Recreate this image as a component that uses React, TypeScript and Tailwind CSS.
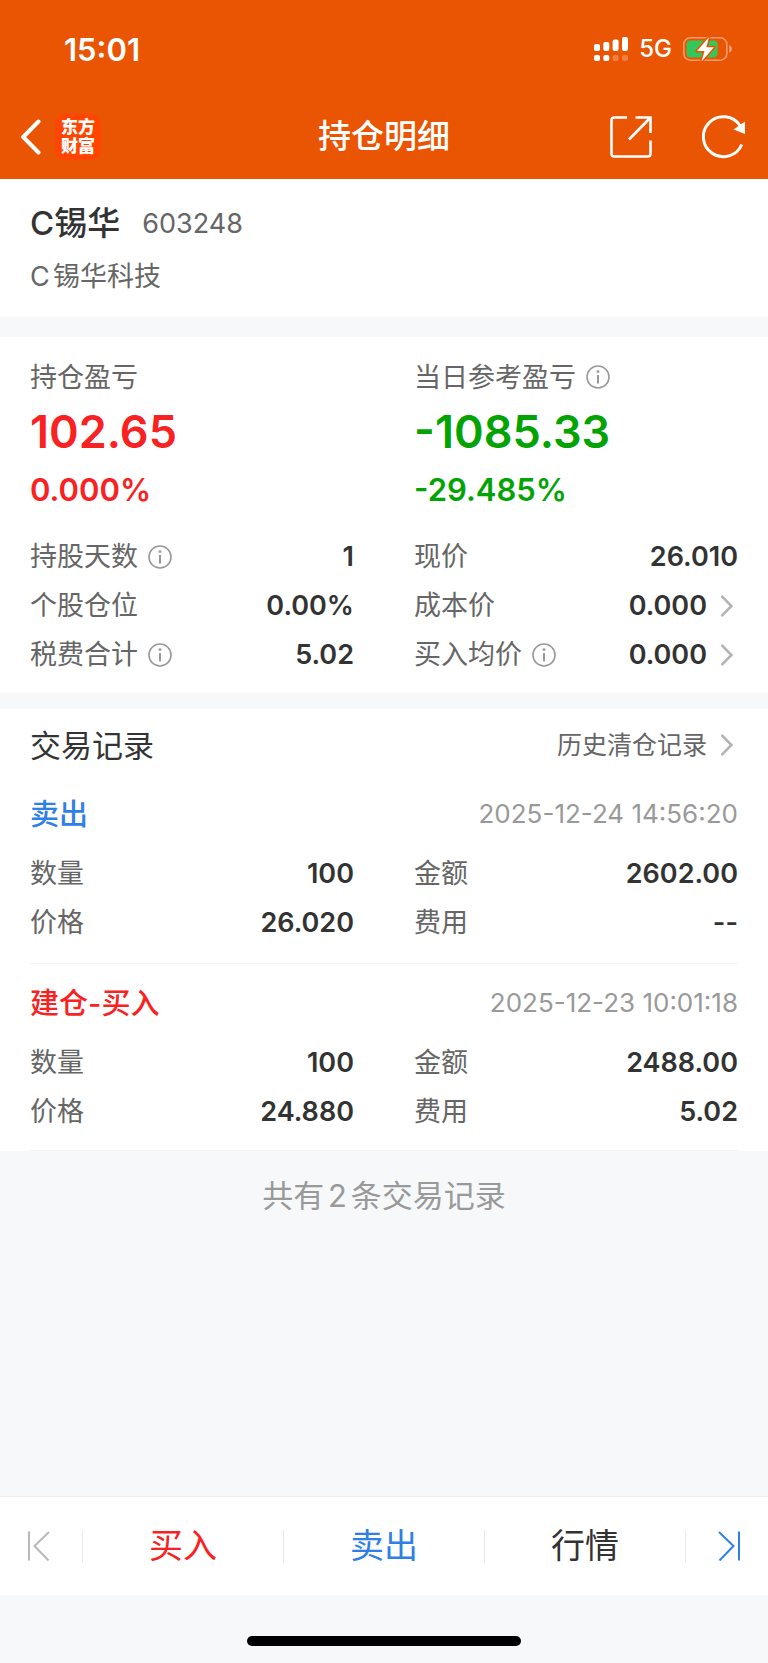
import { ReactNode } from "react";

type RowProps = {
  label: string;
  value: string;
  info?: boolean;
  link?: boolean;
};

type TradeRecord = {
  type: string;
  color: string;
  time: string;
  rows: RowProps[];
};

const holdingRows: RowProps[] = [
  { label: "持股天数", value: "1", info: true },
  { label: "现价", value: "26.010" },
  { label: "个股仓位", value: "0.00%" },
  { label: "成本价", value: "0.000", link: true },
  { label: "税费合计", value: "5.02", info: true },
  { label: "买入均价", value: "0.000", info: true, link: true },
];

const records: TradeRecord[] = [
  {
    type: "卖出",
    color: "text-[#2f80e6]",
    time: "2025-12-24 14:56:20",
    rows: [
      { label: "数量", value: "100" },
      { label: "金额", value: "2602.00" },
      { label: "价格", value: "26.020" },
      { label: "费用", value: "--" },
    ],
  },
  {
    type: "建仓-买入",
    color: "text-[#f92222]",
    time: "2025-12-23 10:01:18",
    rows: [
      { label: "数量", value: "100" },
      { label: "金额", value: "2488.00" },
      { label: "价格", value: "24.880" },
      { label: "费用", value: "5.02" },
    ],
  },
];

const InfoButton = ({ label }: { label: string }) => (
  <button type="button" aria-label={`${label}说明`} className="shrink-0">
    <svg width="24" height="24" viewBox="0 0 24 24" fill="none">
      <circle cx="12" cy="12" r="11" stroke="#999" strokeWidth="1.6" />
      <circle cx="12" cy="6.6" r="1.4" fill="#999" />
      <path d="M12 10v8.4" stroke="#999" strokeWidth="2" />
    </svg>
  </button>
);

const Chevron = () => (
  <svg width="12" height="22" viewBox="0 0 12 22" fill="none" className="mr-[5px] shrink-0">
    <path d="M1.2 1.6L10.4 11L1.2 20.4" stroke="#b4b4b4" strokeWidth="2.6" strokeLinecap="round" />
  </svg>
);

const Row = ({ label, value, info, link }: RowProps) => (
  <div className="flex h-[49px] items-center justify-between">
    <dt className="flex items-center gap-2.5 text-[27px] text-[#666]">
      {label}
      {info && <InfoButton label={label} />}
    </dt>
    <dd className="text-[27px] font-semibold text-[#333]">
      {link ? (
        <button type="button" className="flex items-center gap-3.5">
          {value}
          <Chevron />
        </button>
      ) : (
        value
      )}
    </dd>
  </div>
);

const StatusBar = () => (
  <div className="flex h-[98px] items-center justify-between pr-9 pl-16">
    <span className="text-[31px] font-semibold">15:01</span>
    <div className="flex items-center gap-[11px]">
      <svg width="34" height="24" viewBox="0 0 34 24" fill="#fff">
        <rect x="0" y="7" width="6" height="7" rx="2" />
        <rect x="9.3" y="5" width="6" height="9" rx="2" />
        <rect x="18.6" y="2.5" width="6" height="11.5" rx="2" />
        <rect x="28" y="0" width="6" height="14" rx="2" />
        <rect x="0" y="18" width="6" height="6" rx="2" />
        <rect x="9.3" y="18" width="6" height="6" rx="2" />
        <rect x="18.6" y="18" width="6" height="6" rx="2" opacity=".25" />
        <rect x="28" y="18" width="6" height="6" rx="2" opacity=".25" />
      </svg>
      <span className="text-[24px] font-medium">5G</span>
      <svg width="49" height="26" viewBox="0 0 49 26" fill="none">
        <rect x=".8" y="1.8" width="43" height="22.4" rx="6.5" stroke="#fff" strokeOpacity=".42" strokeWidth="1.6" />
        <path d="M46.3 9.3c3.3 1.200 3.300 6.200 0 7.400z" fill="#fff" fillOpacity=".5" />
        <rect x="3.500" y="4.500" width="31" height="17" rx="4" fill="#34c759" />
        <path
          d="M26 1L14 15h7.500L18.500 25.500L31 11.200h-7.600z"
          fill="#fff"
          stroke="#ea5504"
          strokeWidth="3"
          strokeLinejoin="round"
          paintOrder="stroke"
        />
      </svg>
    </div>
  </div>
);

const NavBar = () => (
  <div className="flex h-[81px] items-center justify-between px-5 pb-1">
    <div className="flex flex-1 items-center gap-3.5">
      <button type="button" aria-label="返回">
        <svg width="21" height="36" viewBox="0 0 21 36" fill="none">
          <path d="M18.5 2.5L3.2 18L18.5 33.5" stroke="#fff" strokeWidth="4" strokeLinecap="round" strokeLinejoin="round" />
        </svg>
      </button>
      <span className="flex size-[46px] flex-col items-center justify-center rounded-[10px] bg-[#ff4500] text-[17px] leading-[19px] font-black">
        <span>东方</span>
        <span>财富</span>
      </span>
    </div>
    <h1 className="text-[33px] font-medium">持仓明细</h1>
    <div className="flex flex-1 items-center justify-end gap-[50px]">
      <button type="button" aria-label="分享">
        <svg width="42" height="42" viewBox="0 0 42 42" fill="none" stroke="#fff" strokeWidth="2.6">
          <path d="M17 1.5H4A2.5 2.5 0 0 0 1.5 4v34A2.5 2.5 0 0 0 4 40.5h34a2.5 2.5 0 0 0 2.5-2.5V24.5" />
          <path d="M25.5 1.5h15v15.5M40 2L19 23.5" />
        </svg>
      </button>
      <button type="button" aria-label="刷新">
        <svg width="46" height="44" viewBox="0 0 46 44" fill="none">
          <path d="M39.8 29.5A20 20 0 1 1 38 10.500" stroke="#fff" strokeWidth="3" />
          <path d="M43 6.500V19L31.500 14.500z" fill="#fff" />
        </svg>
      </button>
    </div>
  </div>
);

const TabButton = ({ color, children }: { color: string; children: ReactNode }) => (
  <button type="button" className={`h-full flex-1 text-[34px] ${color}`}>
    {children}
  </button>
);

const Divider = () => <span className="h-[33px] w-px bg-[#e9e9e9]" />;

const App = () => {
  return (
    <div className="flex min-h-screen flex-col bg-[#f7f8fa] font-[Inter,'Noto_Sans_CJK_SC',sans-serif] leading-none text-[#333]">
      <header className="bg-[#ea5504] text-white">
        <StatusBar />
        <NavBar />
      </header>

      <main className="flex-1">
        <section className="bg-white px-[30px] pt-5 pb-3">
          <div className="flex h-12 items-center gap-[22px]">
            <h2 className="text-[33px] font-medium">C锡华</h2>
            <span className="text-[27px] text-[#666]">603248</span>
          </div>
          <p className="flex h-[58px] items-center text-[27px] text-[#666] [text-autospace:normal]">
            C锡华科技
          </p>
        </section>

        <section className="mt-5 bg-white px-[30px] pt-4 pb-3.5">
          <div className="grid grid-cols-2 gap-x-[60px]">
            <div>
              <h3 className="flex h-12 items-center text-[27px] text-[#666]">持仓盈亏</h3>
              <p className="flex h-[60px] items-center text-[45px] font-semibold text-[#f92222]">102.65</p>
              <p className="flex h-14 items-center text-[31px] font-semibold text-[#f92222]">0.000%</p>
            </div>
            <div>
              <h3 className="flex h-12 items-center gap-2.5 text-[27px] text-[#666]">
                当日参考盈亏
                <InfoButton label="当日参考盈亏" />
              </h3>
              <p className="flex h-[60px] items-center text-[45px] font-semibold text-[#04a304]">-1085.33</p>
              <p className="flex h-14 items-center text-[31px] font-semibold text-[#04a304]">-29.485%</p>
            </div>
          </div>
          <dl className="mt-[15px] grid grid-cols-2 gap-x-[60px]">
            {holdingRows.map((row) => (
              <Row key={row.label} {...row} />
            ))}
          </dl>
        </section>

        <section className="mt-4 bg-white px-[30px] pt-1.5">
          <div className="flex h-[60px] items-center justify-between">
            <h2 className="text-[31px]">交易记录</h2>
            <button type="button" className="flex items-center gap-3.5 text-[25px] text-[#666]">
              历史清仓记录
              <Chevron />
            </button>
          </div>
          {records.map((record) => (
            <article key={record.time} className="border-b border-[#f4f4f6] pt-3 pb-4 last:pb-3.5">
              <div className="flex h-[54px] items-center justify-between">
                <h3 className={`text-[29px] font-medium ${record.color}`}>{record.type}</h3>
                <time className="text-[26px] text-[#999]">{record.time}</time>
              </div>
              <dl className="mt-2 grid grid-cols-2 gap-x-[60px]">
                {record.rows.map((row) => (
                  <Row key={row.label} {...row} />
                ))}
              </dl>
            </article>
          ))}
        </section>

        <p className="flex h-[88px] items-center justify-center text-[31px] text-[#999] [text-autospace:normal]">
          共有2条交易记录
        </p>
      </main>

      <footer>
        <nav className="flex h-[99px] items-center border-t border-[#f0f0f0] bg-white">
          <button type="button" aria-label="上一只" className="flex h-full w-[82px] items-center pl-7">
            <svg width="22" height="30" viewBox="0 0 22 30" fill="none" stroke="#b8b8b8" strokeWidth="2">
              <path d="M1 .5v29M21 1L6.5 15L20.5 29.5" />
            </svg>
          </button>
          <Divider />
          <TabButton color="text-[#f92222]">买入</TabButton>
          <Divider />
          <TabButton color="text-[#2f80e6]">卖出</TabButton>
          <Divider />
          <TabButton color="text-[#333]">行情</TabButton>
          <Divider />
          <button type="button" aria-label="下一只" className="flex h-full w-[82px] items-center justify-end pr-7">
            <svg width="22" height="30" viewBox="0 0 22 30" fill="none" stroke="#2f80e6" strokeWidth="2">
              <path d="M21 .5v29M1 1L15.5 15L1.5 29.5" />
            </svg>
          </button>
        </nav>
        <div className="flex h-[68px] items-end justify-center pb-[17px]">
          <span className="h-2.5 w-[274px] rounded-full bg-black" />
        </div>
      </footer>
    </div>
  );
};

export default App;
